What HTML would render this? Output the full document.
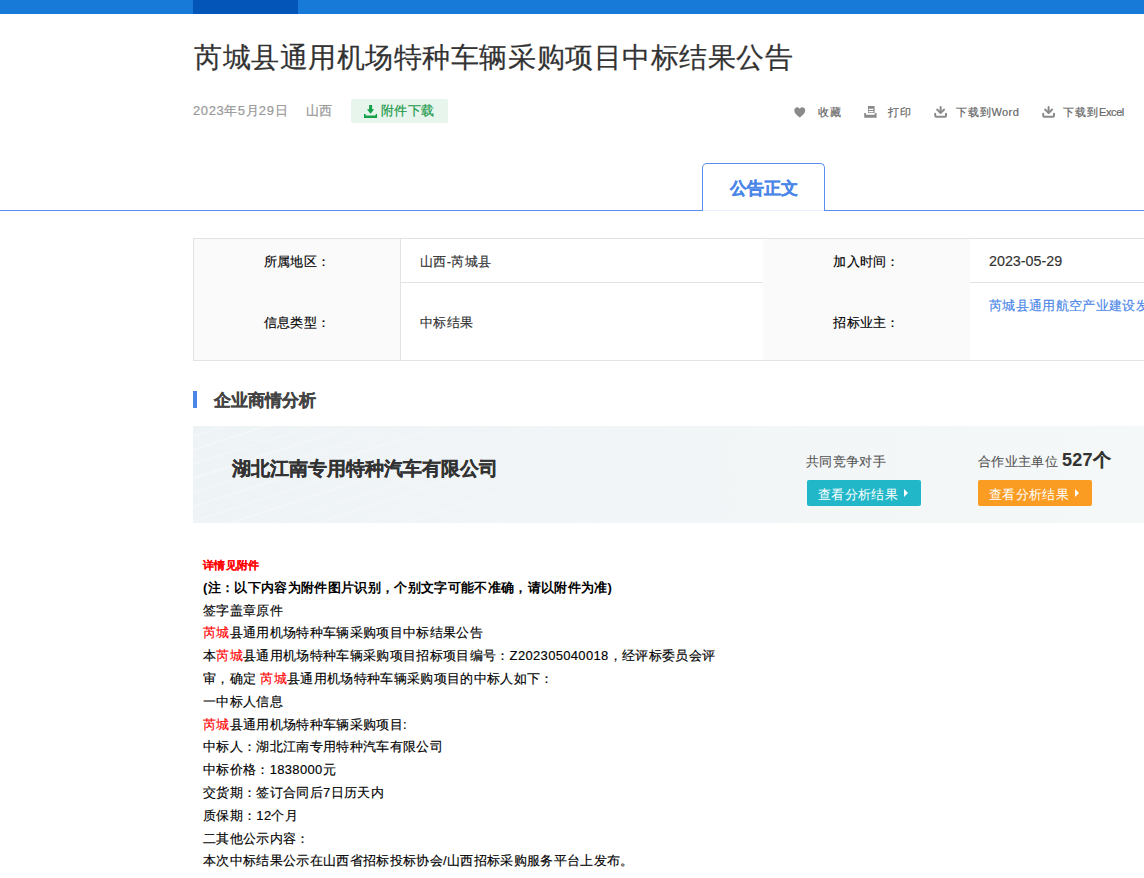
<!DOCTYPE html>
<html><head><meta charset="utf-8">
<style>
*{margin:0;padding:0;box-sizing:border-box}
html,body{width:1144px;height:878px;overflow:hidden;background:#fff;font-family:"Liberation Sans",sans-serif;color:#333}
.abs{position:absolute;white-space:nowrap}
#bar{left:0;top:0;width:1144px;height:14px;background:#1779d8}
#bar i{position:absolute;left:193px;top:0;width:105px;height:14px;background:#0455b8}
#title{-webkit-text-stroke:0.2px currentColor;left:194px;top:38px;font-size:28px;letter-spacing:0.55px;line-height:40px;color:#333}
.meta{-webkit-text-stroke:0.2px currentColor;font-size:13px;letter-spacing:0.33px;color:#999;line-height:20px;top:101px}
#dl{left:351px;top:99px;width:97px;height:24px;background:#e8f5ec;border-radius:2px;color:#1e9a4c;font-size:13px;line-height:24px}
.tool{-webkit-text-stroke:0.2px currentColor;top:102px;font-size:11px;letter-spacing:1px;color:#666;line-height:20px}
#tabline{left:0;top:210px;width:1144px;height:1px;background:#5b8ef0}
#tab{left:702px;top:163px;width:123px;height:48px;border:1px solid #5b8ef0;border-bottom:none;border-radius:5px 5px 0 0;background:#fff;text-align:center;font-size:17px;font-weight:bold;color:#4a86e8;-webkit-text-stroke:0.3px #4a86e8;line-height:50px}
#tbl{left:193px;top:238px;width:1000px;height:123px;border:1px solid #e3e3e3;border-right:none}
.cellg{position:absolute;background:#fafafa}
.hl{position:absolute;height:1px;background:#e3e3e3}
.vl{position:absolute;width:1px;background:#e3e3e3}
.lab{position:absolute;-webkit-text-stroke:0.15px currentColor;font-size:13px;letter-spacing:0.33px;color:#000;line-height:22px;text-align:center;white-space:nowrap}
.val{position:absolute;-webkit-text-stroke:0.15px currentColor;font-size:13px;letter-spacing:0.33px;color:#333;line-height:22px;white-space:nowrap}
#sec{left:193px;top:391px;width:4px;height:17px;background:#4a86e8}
#sect{left:214px;top:389px;font-size:17px;font-weight:bold;color:#444;-webkit-text-stroke:0.3px #444;line-height:24px}
#banner{left:193px;top:426px;width:951px;height:97px;background:#f2f6f8;overflow:hidden}
#cname{left:232px;top:455px;font-size:19px;font-weight:bold;color:#333;-webkit-text-stroke:0.25px #333;line-height:28px}
.sm{-webkit-text-stroke:0.1px currentColor;font-size:13px;letter-spacing:0.33px;color:#555;line-height:18px}
.btn{position:absolute;top:480px;width:114px;height:26px;color:#fff;font-size:13px;letter-spacing:0.33px;line-height:30px;border-radius:2px}
#content{left:203px;top:554px;font-size:13px;letter-spacing:0.33px;line-height:22.8px;color:#000;-webkit-text-stroke:0.15px currentColor}
.red{color:#f00}
</style></head><body>
<div id="bar" class="abs"><i></i></div>
<div id="title" class="abs">芮城县通用机场特种车辆采购项目中标结果公告</div>
<div class="abs meta" style="left:193px"><span style="letter-spacing:0.6px">2023</span>年<span style="letter-spacing:0.6px">5</span>月<span style="letter-spacing:0.6px">29</span>日</div>
<div class="abs meta" style="left:306px">山西</div>
<div id="dl" class="abs">
  <svg style="position:absolute;left:12.9px;top:6px" width="14" height="13" viewBox="0 0 14 13"><path d="M5.1 0h3v4.2h2.1L6.6 8.8 2.9 4.2h2.2z" fill="#16a04a"/><path d="M0 9.1h1.6v1.5h10V9.1h1.5v3.8H0z" fill="#16a04a"/></svg>
  <span style="position:absolute;left:30px;top:0;letter-spacing:0.33px;-webkit-text-stroke:0.2px currentColor">附件下载</span>
</div>
<!-- toolbar -->
<svg class="abs" style="left:793.5px;top:106.5px" width="12" height="11" viewBox="0 0 12 11"><path d="M5.75 10.4C2.6 7.9 0.3 6.1 0.3 3.4 0.3 1.6 1.6 0.3 3.2 0.3c1.1 0 2 0.6 2.55 1.5C6.3 0.9 7.2 0.3 8.3 0.3c1.6 0 2.9 1.3 2.9 3.1 0 2.7-2.3 4.5-5.45 7z" fill="#8a8a8a"/></svg>
<div class="abs tool" style="left:818px">收藏</div>
<svg class="abs" style="left:864px;top:106px" width="13" height="12" viewBox="0 0 13 12"><path d="M4 0h6.6v7H4z M4.7 2.7v1.2h4.7V2.7z M4.7 5v1.2h4.7V5z" fill="#8a8a8a" fill-rule="evenodd"/><path d="M0.2 7h1.8v1.8h8.8V7h1.8v4.7H0.2z" fill="#8a8a8a"/></svg>
<div class="abs tool" style="left:888px">打印</div>
<svg class="abs" style="left:934px;top:106px" width="13" height="12" viewBox="0 0 13 12"><g fill="none" stroke="#8a8a8a" stroke-width="2" stroke-linecap="round" stroke-linejoin="round"><path d="M6.6 1V6.3"/><path d="M3.1 3.6L6.6 6.9 10.1 3.6"/><path d="M1.2 7.8V9.8Q1.2 10.7 2.2 10.7H11Q12 10.7 12 9.8V7.8"/></g></svg>
<div class="abs tool" style="left:955.5px">下载到<span style="letter-spacing:0.4px">Word</span></div>
<svg class="abs" style="left:1042px;top:106px" width="13" height="12" viewBox="0 0 13 12"><g fill="none" stroke="#8a8a8a" stroke-width="2" stroke-linecap="round" stroke-linejoin="round"><path d="M6.6 1V6.3"/><path d="M3.1 3.6L6.6 6.9 10.1 3.6"/><path d="M1.2 7.8V9.8Q1.2 10.7 2.2 10.7H11Q12 10.7 12 9.8V7.8"/></g></svg>
<div class="abs tool" style="left:1063px">下载到<span style="letter-spacing:-0.4px">Excel</span></div>
<!-- tab -->
<div id="tabline" class="abs"></div>
<div id="tab" class="abs">公告正文<i style="position:absolute;left:0;right:0;bottom:0;height:1px;background:#e8f0fd"></i></div>
<!-- table -->
<div id="tbl" class="abs">
  <div class="cellg" style="left:0;top:0;width:206px;height:121px"></div>
  <div class="vl" style="left:206px;top:0;height:121px"></div>
  <div class="hl" style="left:207px;top:43px;width:800px"></div>
  <div class="cellg" style="left:569px;top:0;width:207px;height:121px"></div>
  <div class="lab" style="left:0;top:12px;width:206px">所属地区：</div>
  <div class="lab" style="left:0;top:73px;width:206px">信息类型：</div>
  <div class="val" style="left:226px;top:12px">山西-芮城县</div>
  <div class="val" style="left:226px;top:73px">中标结果</div>
  <div class="lab" style="left:569px;top:12px;width:207px">加入时间：</div>
  <div class="lab" style="left:569px;top:73px;width:207px">招标业主：</div>
  <div class="val" style="left:795px;top:11px;color:#333;font-size:14.3px;letter-spacing:0">2023-05-29</div>
  <div class="val" style="left:795px;top:56px;color:#4a86e8">芮城县通用航空产业建设发展有限公司</div>
</div>
<!-- section -->
<div id="sec" class="abs"></div>
<div id="sect" class="abs">企业商情分析</div>
<div id="banner" class="abs">
  <div style="position:absolute;left:0;top:0;width:951px;height:97px;background:linear-gradient(90deg,#eef3f6 0%,#f1f5f7 40%,#f5f8f8 100%)"></div>
  <div style="position:absolute;left:0;top:0;width:600px;height:97px;background:repeating-linear-gradient(-18deg,rgba(255,255,255,0) 0px,rgba(255,255,255,0) 10px,rgba(255,255,255,0.4) 12px,rgba(255,255,255,0) 14px,rgba(255,255,255,0) 23px,rgba(255,255,255,0.3) 25px,rgba(255,255,255,0) 27px);-webkit-mask-image:linear-gradient(90deg,#000 0%,rgba(0,0,0,0.6) 40%,transparent 100%)"></div>
</div>
<div id="cname" class="abs">湖北江南专用特种汽车有限公司</div>
<div class="abs sm" style="left:806px;top:453px">共同竞争对手</div>
<div class="btn" style="left:807px;background:#22b7c8"><span style="position:absolute;left:11px">查看分析结果</span><svg style="position:absolute;left:97px;top:9px" width="5" height="8"><path d="M0 0l4 4-4 4z" fill="#fff"/></svg></div>
<div class="abs sm" style="left:978px;top:451px">合作业主单位 <b style="font-size:18px;color:#333;font-weight:bold">527个</b></div>
<div class="btn" style="left:978px;background:#fa9c22"><span style="position:absolute;left:11px">查看分析结果</span><svg style="position:absolute;left:97px;top:9px" width="5" height="8"><path d="M0 0l4 4-4 4z" fill="#fff"/></svg></div>
<!-- content -->
<div id="content" class="abs">
<div class="red" style="font-size:11px;font-weight:bold;-webkit-text-stroke:0.05px">详情见附件</div>
<div style="font-weight:bold;-webkit-text-stroke:0px">(注：以下内容为附件图片识别，个别文字可能不准确，请以附件为准)</div>
<div>签字盖章原件</div>
<div><span class="red">芮城</span>县通用机场特种车辆采购项目中标结果公告</div>
<div>本<span class="red">芮城</span>县通用机场特种车辆采购项目招标项目编号：Z202305040018，经评标委员会评</div>
<div>审，确定 <span class="red">芮城</span>县通用机场特种车辆采购项目的中标人如下：</div>
<div>一中标人信息</div>
<div><span class="red">芮城</span>县通用机场特种车辆采购项目:</div>
<div>中标人：湖北江南专用特种汽车有限公司</div>
<div>中标价格：1838000元</div>
<div>交货期：签订合同后7日历天内</div>
<div>质保期：12个月</div>
<div>二其他公示内容：</div>
<div>本次中标结果公示在山西省招标投标协会/山西招标采购服务平台上发布。</div>
</div>
</body></html>
